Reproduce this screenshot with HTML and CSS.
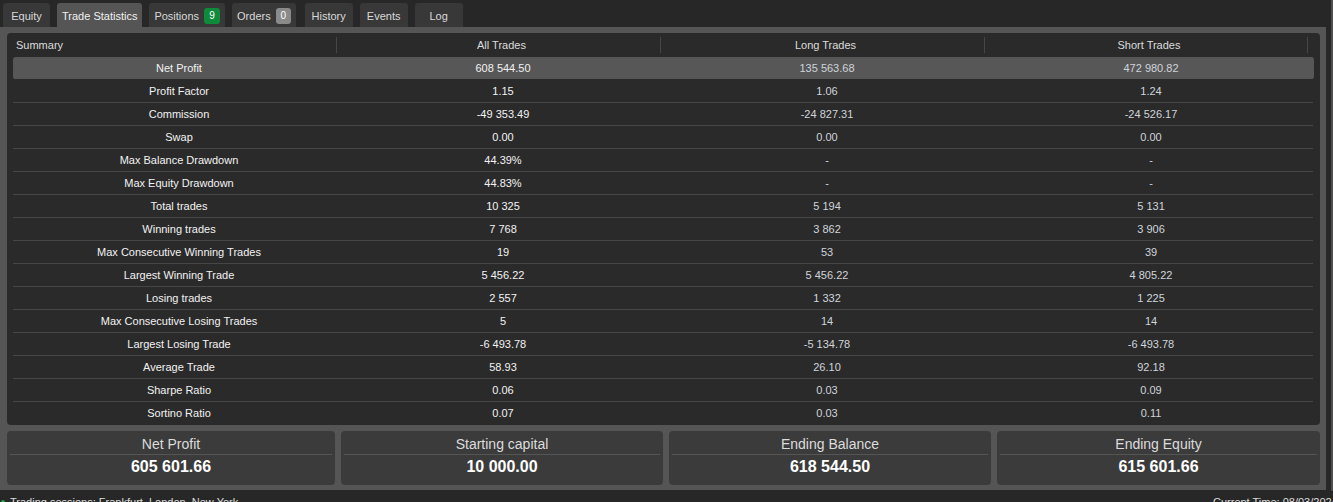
FILE: index.html
```html
<!DOCTYPE html>
<html>
<head>
<meta charset="utf-8">
<link rel="stylesheet" href="styles.css">
</head>
<body>
<div class="app">
  <div class="main">
    <div class="tabs">
      <div class="tab">Equity</div>
      <div class="tab active">Trade Statistics</div>
      <div class="tab">Positions <span class="badge green">9</span></div>
      <div class="tab orders">Orders <span class="badge grey">0</span></div>
      <div class="tab">History</div>
      <div class="tab">Events</div>
      <div class="tab">Log</div>
    </div>
    <div class="panel">
      <div class="table">
        <div class="head">
          <div class="hcell first">Summary</div>
          <div class="hcell">All Trades</div>
          <div class="hcell">Long Trades</div>
          <div class="hcell">Short Trades</div>
        </div>
        <div class="row hl"><div class="c lab">Net Profit</div><div class="c all">608 544.50</div><div class="c side">135 563.68</div><div class="c side">472 980.82</div></div>
        <div class="row"><div class="c lab">Profit Factor</div><div class="c all">1.15</div><div class="c side">1.06</div><div class="c side">1.24</div></div>
        <div class="row"><div class="c lab">Commission</div><div class="c all">-49 353.49</div><div class="c side">-24 827.31</div><div class="c side">-24 526.17</div></div>
        <div class="row"><div class="c lab">Swap</div><div class="c all">0.00</div><div class="c side">0.00</div><div class="c side">0.00</div></div>
        <div class="row"><div class="c lab">Max Balance Drawdown</div><div class="c all">44.39%</div><div class="c side">-</div><div class="c side">-</div></div>
        <div class="row"><div class="c lab">Max Equity Drawdown</div><div class="c all">44.83%</div><div class="c side">-</div><div class="c side">-</div></div>
        <div class="row"><div class="c lab">Total trades</div><div class="c all">10 325</div><div class="c side">5 194</div><div class="c side">5 131</div></div>
        <div class="row"><div class="c lab">Winning trades</div><div class="c all">7 768</div><div class="c side">3 862</div><div class="c side">3 906</div></div>
        <div class="row"><div class="c lab">Max Consecutive Winning Trades</div><div class="c all">19</div><div class="c side">53</div><div class="c side">39</div></div>
        <div class="row"><div class="c lab">Largest Winning Trade</div><div class="c all">5 456.22</div><div class="c side">5 456.22</div><div class="c side">4 805.22</div></div>
        <div class="row"><div class="c lab">Losing trades</div><div class="c all">2 557</div><div class="c side">1 332</div><div class="c side">1 225</div></div>
        <div class="row"><div class="c lab">Max Consecutive Losing Trades</div><div class="c all">5</div><div class="c side">14</div><div class="c side">14</div></div>
        <div class="row"><div class="c lab">Largest Losing Trade</div><div class="c all">-6 493.78</div><div class="c side">-5 134.78</div><div class="c side">-6 493.78</div></div>
        <div class="row"><div class="c lab">Average Trade</div><div class="c all">58.93</div><div class="c side">26.10</div><div class="c side">92.18</div></div>
        <div class="row"><div class="c lab">Sharpe Ratio</div><div class="c all">0.06</div><div class="c side">0.03</div><div class="c side">0.09</div></div>
        <div class="row last"><div class="c lab">Sortino Ratio</div><div class="c all">0.07</div><div class="c side">0.03</div><div class="c side">0.11</div></div>
      </div>
      <div class="cards">
        <div class="card"><div class="ctitle">Net Profit</div><div class="cval">605 601.66</div></div>
        <div class="card"><div class="ctitle">Starting capital</div><div class="cval">10 000.00</div></div>
        <div class="card"><div class="ctitle">Ending Balance</div><div class="cval">618 544.50</div></div>
        <div class="card"><div class="ctitle">Ending Equity</div><div class="cval">615 601.66</div></div>
      </div>
    </div>
    <div class="status">
      <div class="sess"><span class="dot"></span>Trading sessions: Frankfurt, London, New York</div>
      <div class="time">Current Time: 08/03/2024 10:42:17</div>
    </div>
  </div>
  <div class="edge"></div>
</div>
</body>
</html>
```

FILE: styles.css
```css
html, body {
  margin: 0;
  padding: 0;
  background: #272727;
  font-family: "Liberation Sans", Arial, sans-serif;
  font-size: 11px;
  color: #e6e6e6;
  overflow: hidden;
}
.app {
  display: flex;
  height: 502px;
}
.main {
  width: 1326px;
  display: flex;
  flex-direction: column;
}
.edge {
  width: 2px;
  margin-left: 5px;
  background: #4e4e4e;
  height: 491px;
}
.tabs {
  display: flex;
  gap: 7px;
  padding: 3px 0 0 3px;
  height: 24px;
}
.tab {
  min-width: 48px;
  padding: 1px 5px 0;
  height: 24px;
  display: flex;
  align-items: center;
  justify-content: center;
  gap: 5px;
  background: #383838;
  color: #d8d8d8;
  border-radius: 3px 3px 0 0;
  font-size: 11px;
  box-sizing: border-box;
}
.tab:first-child { min-width: 47px; }
.tab.orders { margin-right: 2px; }
.tab.active { background: #555555; color: #f0f0f0; }
.badge {
  display: inline-flex;
  align-items: center;
  justify-content: center;
  width: 16px;
  height: 16px;
  border-radius: 3px;
  color: #fff;
  font-size: 10px;
}
.badge.green { background: #0f8a3a; }
.badge.grey { background: #8a8a8a; width: 15px; }
.panel {
  background: #555555;
  padding: 6px 6px 5px 7px;
  display: flex;
  flex-direction: column;
  gap: 6px;
  box-sizing: border-box;
  height: 464px;
}
.table {
  background: #2a2a2a;
  border-radius: 4px;
  padding: 0 7px 1px 6px;
  height: 392px;
  box-sizing: border-box;
}
.head {
  display: grid;
  grid-template-columns: 324px 324px 324px 323px;
  height: 24px;
  align-items: center;
  color: #dcdcdc;
}
.hcell {
  text-align: center;
  padding-left: 6px;
  border-right: 1px solid #464646;
  line-height: 16px;
}
.hcell.first { text-align: left; padding-left: 3px; }
.row {
  display: grid;
  grid-template-columns: 324px 324px 324px 324px;
  padding-left: 4px;
  height: 22px;
  align-items: center;
  border-bottom: 1px solid #464646;
}
.row.hl {
  background: #575757;
  border-radius: 3px;
  border-bottom-color: #2a2a2a;
  margin-right: -1px;
}
.row.last { border-bottom: none; }
.c { text-align: center; }
.lab { color: #f2f2f2; }
.all { color: #f2f2f2; }
.side { color: #cfd4da; }
.cards {
  display: grid;
  grid-template-columns: 328px 322px 322px 1fr;
  gap: 6px;
}
.card {
  background: #3b3b3b;
  border-radius: 4px;
  padding: 3px 3px 6px;
  text-align: center;
}
.ctitle {
  font-size: 14px;
  line-height: 20px;
  color: #dcdcdc;
  border-bottom: 1px solid #555;
}
.cval {
  font-size: 16px;
  font-weight: bold;
  line-height: 24px;
  color: #ffffff;
}
.status {
  display: flex;
  padding: 6px 0 0 1px;
  color: #dcdcdc;
  width: 1333px;
}
.sess { display: flex; align-items: center; gap: 5px; }
.dot {
  width: 4px;
  height: 4px;
  border-radius: 50%;
  background: #1fa84a;
}
.time {
  margin-left: auto;
  width: 121px;
  white-space: nowrap;
}
```
